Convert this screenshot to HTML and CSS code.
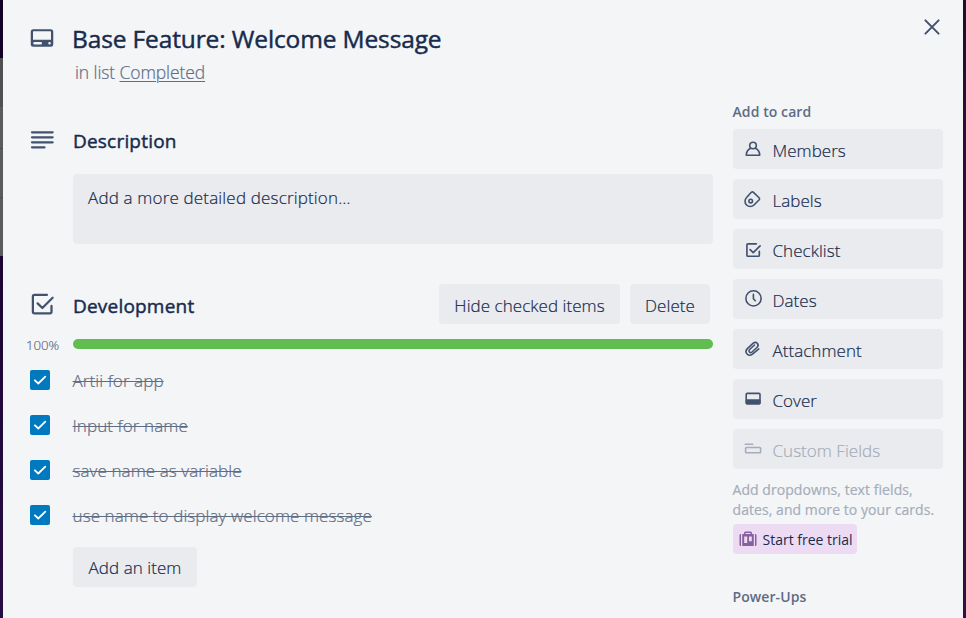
FILE: index.html
```html
<!DOCTYPE html>
<html lang="en">
<head>
<meta charset="utf-8">
<title>Base Feature: Welcome Message</title>
<link rel="stylesheet" href="styles.css">
</head>
<body>
<svg width="0" height="0" class="defs" aria-hidden="true">
  <symbol id="check-square" viewBox="0 0 24 24" fill="none" stroke="currentColor" stroke-linecap="round" stroke-linejoin="round"><path d="M16 4.600H6A1.300 1.300 0 0 0 4.700 5.900V18.200A1.300 1.300 0 0 0 6 19.500H18.300A1.300 1.300 0 0 0 19.600 18.200V13.500M8.500 11.500L12.300 15.200L20.500 7"/></symbol>
  <symbol id="tick" viewBox="0 0 20 20" fill="none" stroke="#fff" stroke-width="1.800" stroke-linecap="round" stroke-linejoin="round"><path d="M4.900 10.300L8.300 13.500L15.300 6.700"/></symbol>
</svg>
<div class="stage">
<div class="edge edge-left"><div class="list"></div></div>
<main class="card">
  <header class="head">
    <svg class="icon-lg" viewBox="0 0 24 24"><path fill="currentColor" fill-rule="evenodd" d="M5 5h14a2 2 0 0 1 2 2v10a2 2 0 0 1-2 2H5a2 2 0 0 1-2-2V7a2 2 0 0 1 2-2zM4.800 7v6.300h14.400V7a.5.5 0 0 0-.5-.5H5.300a.5.5 0 0 0-.5.5zM6 15.100a1 1 0 0 0 0 2h5a1 1 0 0 0 0-2zM18 15.100a1 1 0 1 0 0 2a1 1 0 1 0 0-2z"/></svg>
    <div class="head-text">
      <h1>Base Feature: Welcome Message</h1>
      <p class="in-list">in list <a>Completed</a></p>
    </div>
    <svg class="close" viewBox="0 0 20 20"><path d="M3.400 3.400L16.600 16.600M16.600 3.400L3.400 16.600"/></svg>
  </header>
  <div class="columns">
    <div class="main">
      <section class="description">
        <div class="title-row">
          <svg class="icon-lg" viewBox="0 0 24 24"><path stroke="currentColor" stroke-width="1.800" stroke-linecap="round" d="M4 5H20.500M4 9H20.500M4 13H20.500M4 17H14"/></svg>
          <h2>Description</h2>
        </div>
        <div class="desc-box">Add a more detailed description…</div>
      </section>
      <section class="checklist">
        <div class="title-row">
          <svg class="icon-lg check"><use href="#check-square"/></svg>
          <h2 class="dev">Development</h2>
          <button class="btn hide">Hide checked items</button>
          <button class="btn delete">Delete</button>
        </div>
        <div class="progress"><span>100%</span><div class="bar"></div></div>
        <ul>
          <li><svg class="box"><use href="#tick"/></svg><s>Artii for app</s></li>
          <li><svg class="box"><use href="#tick"/></svg><s>Input for name</s></li>
          <li><svg class="box"><use href="#tick"/></svg><s>save name as variable</s></li>
          <li><svg class="box"><use href="#tick"/></svg><s>use name to display welcome message</s></li>
        </ul>
        <button class="btn add">Add an item</button>
      </section>
    </div>
    <aside class="side">
      <h3>Add to card</h3>
      <nav>
        <a class="action"><svg viewBox="0 0 20 20"><circle cx="10" cy="6.500" r="3.300"/><path d="M7.700 9.200C5 10.300 3.300 12.500 3.300 16.300H16.700C16.700 12.500 15 10.300 12.300 9.200"/></svg><span>Members</span></a>
        <a class="action"><svg viewBox="0 0 20 20"><path d="M8.300 3.300Q9.400 2.400 10.500 3.400L16.300 9Q17 9.900 16.200 10.800L11 16A5.100 5.100 0 0 1 3.600 8.500Z"/><circle cx="7.700" cy="12.100" r="1.800"/></svg><span>Labels</span></a>
        <a class="action"><svg class="small-check"><use href="#check-square"/></svg><span>Checklist</span></a>
        <a class="action"><svg viewBox="0 0 20 20"><circle cx="10.500" cy="9.400" r="7.600"/><path d="M10.400 5.200V9.800L12.300 11.700"/></svg><span>Dates</span></a>
        <a class="action"><svg viewBox="0 0 20 20"><path d="M15.800 9.900L9.500 15.200C5.400 18.200 .8 13.500 4.300 9.600L10 4.300C13.300 1.600 16.900 5.600 13.900 8.500L9 13C7 14.700 4.800 12.300 6.600 10.500L11.500 6"/></svg><span>Attachment</span></a>
        <a class="action"><svg viewBox="0 0 20 20"><rect x="3.200" y="4.400" width="13.800" height="10.400" rx="1"/><path d="M3.500 11H16.700V14.600H3.500Z" fill="currentColor"/></svg><span>Cover</span></a>
        <a class="action disabled"><svg viewBox="0 0 20 20"><path d="M2.300 5.300H9.800"/><rect x="2.600" y="8.500" width="15" height="5.200" rx=".8"/></svg><span>Custom Fields</span></a>
      </nav>
      <p class="hint">Add dropdowns, text fields,<br>dates, and more to your cards.</p>
      <a class="trial"><svg viewBox="0 0 18 16"><path fill="currentColor" fill-rule="evenodd" d="M5 3V2Q5 .5 6.500 .5H11.500Q13 .5 13 2V3H14.800V15H3.200V3ZM6.500 3H11.500V2H6.500ZM5.200 5.500V12H8.200V5.500ZM10 5.500V10.200H12.800V5.500ZM.5 4Q.5 3 2 3V15Q.5 15 .5 14ZM16 3Q17.500 3 17.500 4V14Q17.500 15 16 15Z"/></svg><span>Start free trial</span></a>
      <h3 class="power">Power-Ups</h3>
    </aside>
  </div>
</main>
<div class="edge edge-right"></div>
</div>
</body>
</html>
```

FILE: styles.css
```css
* { box-sizing: border-box; }
body { margin: 0; overflow: hidden; font-family: "Open Sans", "Noto Sans", sans-serif; color: #172b4d; -webkit-text-stroke: .2px currentColor; }
h1, h2, h3, p, ul { margin: 0; padding: 0; white-space: nowrap; }
.defs { display: block; height: 0; }
.stage { display: flex; width: 966px; height: 618px; }
.edge { width: 3px; flex: none; background: #240b3b; }
.edge-left { padding-top: 58px; background: linear-gradient(#130025, #280d44); }
.list { height: 198px; background: linear-gradient(#505050 49px, #5b5b5b 49px 90px, #454e5d 90px 91px, #5b5b5b 91px 139px, #454e5d 139px 140px, #5b5b5b 140px); }
.edge-right { background: linear-gradient(#210d2b, #2f0d38 20%, #35103c); }
.card { width: 960px; flex: none; background: #f4f5f7; }
.head { display: flex; height: 102px; padding: 0 21px 0 24px; }
.icon-lg { width: 30px; height: 30px; flex: none; color: #42526e; }
.head .icon-lg { margin-top: 23px; }
.head-text { flex: 1; margin-left: 15px; padding-top: 22px; }
h1 { font-size: 24.500px; line-height: 34px; font-weight: 500; letter-spacing: -.13px; -webkit-text-stroke: .45px currentColor; }
.in-list { margin: 4px 0 0 3px; font-size: 17.500px; line-height: 24px; font-weight: 300; color: #5e6c84; letter-spacing: -.1px; }
.in-list a { text-decoration: underline; text-decoration-thickness: 1px; text-underline-offset: 2px; }
.close { width: 20px; height: 20px; margin-top: 17px; fill: none; stroke: #42526e; stroke-width: 2; stroke-linecap: round; }
.columns { display: flex; gap: 20px; padding-left: 24px; }
.main { width: 686px; flex: none; padding-top: 22px; }
.title-row { display: flex; align-items: center; height: 34px; }
h2 { margin-left: 16px; font-size: 19px; line-height: 26px; font-weight: 500; letter-spacing: .2px; -webkit-text-stroke: .45px currentColor; }
.description .icon-lg { margin-top: -1px; }
.check { stroke-width: 1.800; }
.desc-box { width: 640px; height: 70px; margin: 16px 0 0 46px; padding: 11px 15px; border-radius: 4px; background: #eaebef; font-size: 17px; line-height: 26px; font-weight: 300; letter-spacing: .17px; }
.checklist { margin-top: 40px; }
.checklist .title-row { height: 40px; }
.dev { flex: 1; padding-top: 4px; }
.btn { height: 40px; border: 0; border-radius: 4px; padding: 4px 0 0; background: #eaebef; color: #172b4d; font: 300 17px/26px "Open Sans", sans-serif; letter-spacing: .05px; white-space: nowrap; -webkit-text-stroke: .2px currentColor; }
.hide { width: 181px; }
.delete { width: 80px; margin: 0 3px 0 10px; }
.progress { display: flex; align-items: center; height: 20px; margin-top: 10px; }
.progress span { width: 47px; margin-left: -1px; padding-top: 2px; font-size: 13.200px; font-weight: 300; color: #5e6c84; }
.bar { width: 640px; height: 10px; border-radius: 5px; background: #61bd4f; }
ul { list-style: none; padding-top: 3px; }
li { display: flex; align-items: center; height: 45px; font-size: 17px; font-weight: 300; letter-spacing: .09px; color: #5e6c84; }
.box { width: 20px; height: 20px; margin: 0 22.500px 0 3px; border-radius: 2px; background: #0079bf; }
s { padding-top: 2px; text-decoration-thickness: 1px; }
.add { width: 124px; margin: 10px 0 0 46px; padding: 2px 0 0; }
.side { width: 210px; }
h3 { margin-left: -.5px; font-size: 14px; line-height: 20px; font-weight: 600; letter-spacing: .08px; color: #5e6c84; -webkit-text-stroke: 0; }
nav { display: grid; gap: 10px; margin-top: 7px; }
.action { display: flex; align-items: center; height: 40px; padding-left: 9.500px; border-radius: 4px; background: #eaebef; font-size: 17px; font-weight: 300; letter-spacing: .04px; }
.action svg { width: 20px; height: 20px; margin-right: 10px; fill: none; stroke: currentColor; stroke-width: 1.600; stroke-linecap: round; stroke-linejoin: round; color: #42526e; }
.action .small-check { stroke-width: 2; margin-top: 1px; }
.action span { padding-top: 2px; }
.disabled, .disabled svg { color: #a5adba; }
.hint { margin: 11px 0 0 -.5px; font-size: 14px; line-height: 20px; letter-spacing: .06px; color: #a5adba; }
.trial { display: flex; align-items: center; width: 124px; height: 30px; margin-top: 4px; padding-left: 6px; border-radius: 4px; background: #eddbf4; font-size: 14px; white-space: nowrap; -webkit-text-stroke: 0; }
.trial svg { width: 18px; height: 16px; margin-right: 5.500px; color: #89609e; }
.power { margin-top: 33px; }
```
